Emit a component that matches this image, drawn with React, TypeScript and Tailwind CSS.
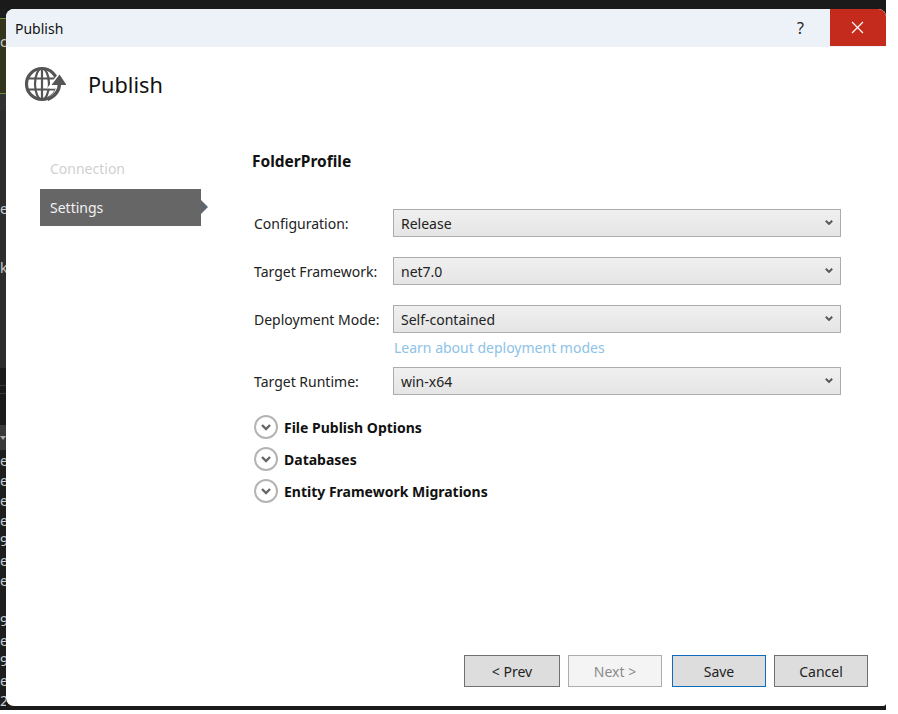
import React from 'react';

const font = "font-['Noto_Sans',sans-serif]";

const fields = [
    { label: 'Configuration:', value: 'Release' },
    { label: 'Target Framework:', value: 'net7.0' },
    { label: 'Deployment Mode:', value: 'Self-contained', link: 'Learn about deployment modes' },
    { label: 'Target Runtime:', value: 'win-x64' },
];

const sections = ['File Publish Options', 'Databases', 'Entity Framework Migrations'];

const gutterLower = ['e', 'e', 'e', 'e', '9', 'e', 'e', '', '9', 'e', '9', 'e', '2'];

const GlobeIcon = () => (
    <svg width="42" height="38" viewBox="0 0 42 38" fill="none" stroke="#555" className="blur-[0.5px]">
        <circle cx="18" cy="18" r="15.5" strokeWidth="3.2" />
        <ellipse cx="18" cy="18" rx="7" ry="15.5" strokeWidth="2.2" />
        <path d="M3 12.500h30M3 23.500h30M18 3v30" strokeWidth="2.2" />
        {/* white gap round the arrow, then the arrow itself */}
        <path d="M36 18c0 8-4 13-11 17" stroke="#fff" strokeWidth="7" />
        <path d="M26 21L36 8l6 13z" fill="#fff" stroke="#fff" strokeWidth="3" />
        <path d="M35.500 17c0 8-4 13-12 16.500" strokeWidth="3.4" />
        <path d="M27.500 19l8-10.500 7 10.500z" fill="#555" stroke="none" />
    </svg>
);

const Chevron = ({ size = 8, color = '#555' }: { size?: number; color?: string }) => (
    <svg width={size} height={size * 0.7} viewBox="0 0 10 7" fill="none" stroke={color} strokeWidth="2.4">
        <path d="M1 1l4 4 4-4" />
    </svg>
);

const ComboBox = ({ value }: { value: string }) => (
    <div className="flex h-7 w-[448px] items-center justify-between border border-[#acacac] bg-gradient-to-b from-[#f0f0f0] to-[#e5e5e5] pl-[7px] pr-[7px] text-[14px] text-[#222]">
        <span>{value}</span>
        <Chevron />
    </div>
);

const FooterButton = ({ label, className }: { label: string; className: string }) => (
    <button className={`h-8 border text-[14px] ${className}`}>{label}</button>
);

const App: React.FC = () => {
    return (
        <div className="h-[714px] w-[898px] overflow-hidden bg-white">
            <div className={`flex h-[710px] w-[886px] flex-col overflow-hidden bg-[#1a1a1a] ${font}`}>
                <div className="h-[9px] shrink-0" />
                <div className="flex min-h-0 flex-1">
                    <div className="flex w-[6px] shrink-0 flex-col overflow-hidden bg-[#1e1e1e] text-[14px] leading-[20px] text-[#ccc]">
                        <div className="mt-[9px] h-[76px] shrink-0 border-y border-[#6b8e3a] bg-[#33351c] pt-[13px]">c</div>
                        <div className="h-[274px] shrink-0 bg-[#2d2d2d]">
                            <div className="h-[16px] bg-[#333]" />
                            <div className="mt-[89px] h-[20px]">e</div>
                            <div className="mt-[39px] h-[20px]">k</div>
                        </div>
                        <div className="h-[57px] shrink-0 bg-[#1a1a1a]">
                            <div className="mt-[17px] h-[9px] border-y border-[#3a3a3a]" />
                        </div>
                        <div className="flex h-[25px] shrink-0 items-center justify-center bg-[#3a3a3a]">
                            <span className="border-x-[3px] border-t-[4px] border-x-transparent border-t-[#aaa]" />
                        </div>
                        <div className="pt-px">
                            {gutterLower.map((ch, i) => (
                                <div key={i} className="h-[20px]">{ch}</div>
                            ))}
                        </div>
                    </div>
                    <div className="flex w-[880px] min-w-0 flex-col overflow-hidden rounded-t-[8px] rounded-bl-[8px] rounded-br-[3px] bg-white">
                        <div className="flex h-[38px] shrink-0 items-center justify-between bg-[#edf2f9] pl-[9px]">
                            <span className="text-[14px] text-[#111]">Publish</span>
                            <div className="flex h-full items-center">
                                <span className="mr-[26px] text-[16px] text-[#222]">?</span>
                                <div className="mb-px flex h-[37px] w-[56px] items-center justify-center bg-[#c42b1c] pr-[2px]">
                                    <svg width="13" height="13" viewBox="0 0 13 13" stroke="#fff" strokeWidth="1.2">
                                        <path d="M1 1l11 11M12 1L1 12" />
                                    </svg>
                                </div>
                            </div>
                        </div>
                        <div className="flex h-[76px] shrink-0 items-center pl-[18px]">
                            <GlobeIcon />
                            <span className="ml-[22px] text-[21.700px] text-[#111]">Publish</span>
                        </div>
                        <div className="flex min-h-0 flex-1">
                            <div className="w-[246px] shrink-0 pl-[34px] pt-[27px] text-[14px]">
                                <div className="flex h-[37px] items-center pl-[10px] text-[#d0d0d0]">Connection</div>
                                <div className="relative mt-[2px] flex h-[37px] w-[161px] items-center bg-[#666] pl-[10px] text-[#f2f2f2]">
                                    Settings
                                    <span className="absolute left-full top-[11px] border-y-[7px] border-l-[7px] border-y-transparent border-l-[#5f6670]" />
                                </div>
                            </div>
                            <div className="flex flex-1 flex-col pt-[28px]">
                                <div className="text-[15.500px] font-bold leading-[20px] text-[#111]">FolderProfile</div>
                                <div className="mt-[38px] flex flex-col pl-[2px]">
                                    {fields.map((f) => (
                                        <div key={f.label} className="mb-[20px]">
                                            <div className="flex items-center">
                                                <span className="w-[139px] pt-px text-[14px] text-[#222]">{f.label}</span>
                                                <ComboBox value={f.value} />
                                            </div>
                                            {f.link && (
                                                <div className="-mb-[11px] mt-[5px] pl-[140px] text-[14px] leading-[20px] text-[#8cc3e6]">{f.link}</div>
                                            )}
                                        </div>
                                    ))}
                                </div>
                                <div className="mt-[-2px] flex flex-col gap-[4px] pl-[2px]">
                                    {sections.map((s) => (
                                        <div key={s} className="flex h-[28px] items-center">
                                            <span className="flex h-6 w-6 items-center justify-center rounded-full border-2 border-[#b4b4b4]">
                                                <Chevron size={10} color="#666" />
                                            </span>
                                            <span className="ml-[6px] text-[14px] font-bold text-[#111]">{s}</span>
                                        </div>
                                    ))}
                                </div>
                                <div className="mb-[19px] mt-auto flex pl-[212px] pr-[18px]">
                                    <FooterButton label="< Prev" className="w-[96px] border-[#707070] bg-[#dddddd] text-[#222]" />
                                    <FooterButton label="Next >" className="ml-[8px] w-[94px] border-[#adadad] bg-[#f4f4f4] text-[#8a8a8a]" />
                                    <FooterButton label="Save" className="ml-[10px] w-[94px] border-[#0f6cbd] bg-[#dddddd] text-[#222]" />
                                    <FooterButton label="Cancel" className="ml-[8px] w-[94px] border-[#707070] bg-[#dddddd] text-[#222]" />
                                </div>
                            </div>
                        </div>
                    </div>
                </div>
                <div className="h-[4px] shrink-0" />
            </div>
        </div>
    );
};

export default App;
